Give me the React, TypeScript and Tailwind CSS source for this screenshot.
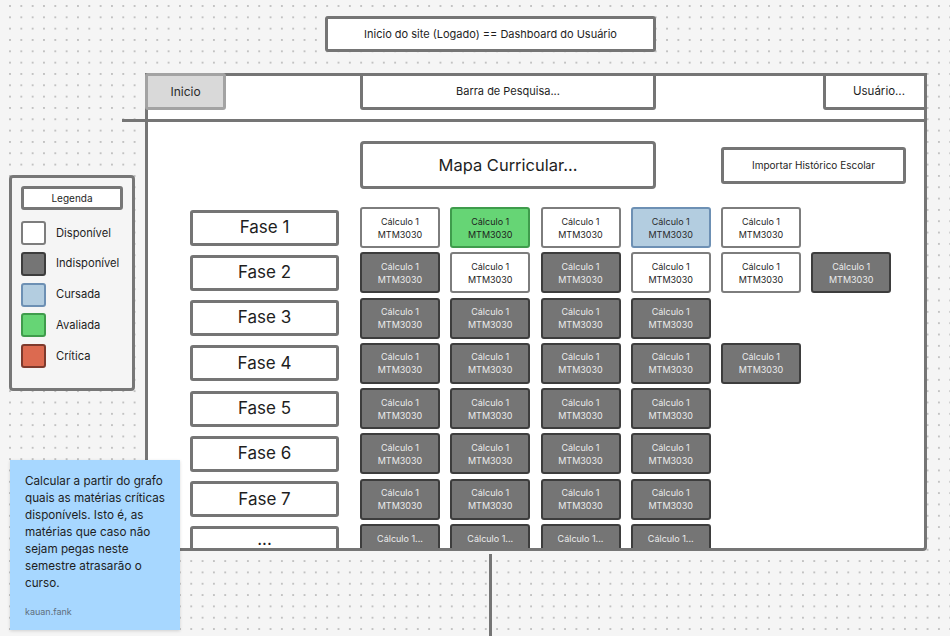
import React from "react";

type Kind = "w" | "d" | "g" | "b";

const rows: Kind[][] = [
  ["w", "g", "w", "b", "w"],
  ["d", "w", "d", "w", "w", "d"],
  ["d", "d", "d", "d"],
  ["d", "d", "d", "d", "d"],
  ["d", "d", "d", "d"],
  ["d", "d", "d", "d"],
  ["d", "d", "d", "d"],
  ["d", "d", "d", "d"],
];

const cardStyles: Record<Kind, string> = {
  w: "bg-white border-[#7d7d7d] text-[#1e1e1e]",
  d: "bg-[#757575] border-[#3d3d3d] text-[#ececec]",
  g: "bg-[#66d575] border-[#3f9c4c] text-[#1e1e1e]",
  b: "bg-[#b3cde0] border-[#6d90b4] text-[#2a2a2a]",
};

function Card({ kind, last }: { kind: Kind; last: boolean }) {
  return (
    <div
      className={`w-[80px] h-[41px] shrink-0 rounded-[3px] border-[2.5px] flex flex-col items-center justify-center text-[9px] leading-[13px] ${cardStyles[kind]}`}
    >
      <span>{last ? "Cálculo 1..." : "Cálculo 1"}</span>
      <span className={last ? "invisible" : ""}>MTM3030</span>
    </div>
  );
}

const legend: { label: string; cls: string }[] = [
  { label: "Disponível", cls: "bg-white border-[#7d7d7d]" },
  { label: "Indisponível", cls: "bg-[#757575] border-[#3d3d3d]" },
  { label: "Cursada", cls: "bg-[#b3cde0] border-[#6d90b4]" },
  { label: "Avaliada", cls: "bg-[#66d575] border-[#3f9c4c]" },
  { label: "Crítica", cls: "bg-[#dc6a50] border-[#7e3a2d]" },
];

export default function App() {
  return (
    <div className="relative w-[950px] h-[636px] overflow-hidden bg-[#f5f5f5] bg-[radial-gradient(circle,#c2c2c2_0.9px,transparent_1.1px)] bg-[length:11.33px_11.33px] bg-[position:4.33px_0.33px] font-['Inter','Noto_Sans',sans-serif] text-[#1e1e1e]">
      {/* Title */}
      <div className="absolute left-[325px] top-[16px] w-[331px] h-[36px] bg-white border-[3px] border-[#757575] rounded-[3px] flex items-center justify-center text-[11px]">
        Inicio do site (Logado) == Dashboard do Usuário
      </div>

      {/* Main frame */}
      <div className="absolute left-[145px] top-[73px] w-[782px] h-[478px] bg-white border-[3px] border-[#757575] rounded-br-[4px] flex flex-col">
        {/* Header */}
        <div className="-mt-[3px] -mx-[3px] h-[37px] flex shrink-0">
          <div className="w-[81px] h-[37px] bg-[#d9d9d9] border-[3px] border-[#a3a3a3] rounded-[3px] flex items-center justify-center text-[12px] text-[#2a2a2a]">
            Inicio
          </div>
          <div className="ml-[134px] w-[296px] h-[37px] bg-white border-[3px] border-[#757575] rounded-b-[3px] flex items-center justify-center text-[11px]">
            Barra de Pesquisa...
          </div>
          <div className="ml-auto w-[104px] h-[37px] bg-white border-[3px] border-[#757575] rounded-[3px] flex items-center justify-end pr-[19px] text-[11.5px]">
            Usuário...
          </div>
        </div>
        <div className="mt-[9px] -ml-[26px] w-[calc(100%+26px)] h-[3px] bg-[#757575] shrink-0" />

        {/* Body */}
        <div className="flex-1 overflow-hidden pl-[42px]">
          <div className="flex items-start mt-[19px] ml-[170px]">
            <div className="w-[296px] h-[48px] border-[3px] border-[#757575] rounded-[4px] flex items-center justify-center text-[16.5px]">
              Mapa Curricular...
            </div>
            <div className="ml-[65px] mt-[6px] w-[185px] h-[37px] border-[3px] border-[#757575] rounded-[3px] flex items-center justify-center text-[10px]">
              Importar Histórico Escolar
            </div>
          </div>

          <div className="mt-[18px] flex flex-col gap-y-[4.3px]">
            {rows.map((r, i) => {
              const last = i === rows.length - 1;
              return (
                <div key={i} className="flex items-center h-[41px]">
                  {last ? (
                    <div className="self-start mt-[2px] w-[149px] h-[40px] shrink-0 border-[3px] border-[#757575] rounded-[3px] flex justify-center text-[17px] leading-[20px]">
                      ...
                    </div>
                  ) : (
                    <div className="w-[149px] h-[36px] shrink-0 border-[3px] border-[#757575] rounded-[3px] flex items-center justify-center text-[17px]">
                      {`Fase ${i + 1}`}
                    </div>
                  )}
                  <div className="ml-[21px] flex gap-x-[10.25px]">
                    {r.map((k, j) => (
                      <Card key={j} kind={k} last={last} />
                    ))}
                  </div>
                </div>
              );
            })}
          </div>
        </div>
      </div>

      {/* Connector line */}
      <div className="absolute left-[489px] top-[554px] w-[2.5px] h-[90px] bg-[#757575]" />

      {/* Legend */}
      <div className="absolute left-[9px] top-[175px] w-[126px] h-[216px] border-[3px] border-[#777] rounded-[4px] bg-[#f5f5f5] px-[9px] pt-[8px]">
        <div className="h-[24px] bg-white border-[3px] border-[#777] rounded-[3px] flex items-center justify-center text-[10px]">
          Legenda
        </div>
        <div className="mt-[11px] flex flex-col gap-y-[6.8px]">
          {legend.map((l) => (
            <div key={l.label} className="flex items-center h-[24px]">
              <div className={`w-[25px] h-[24px] rounded-[3px] border-[2.5px] ${l.cls}`} />
              <span className="ml-[10px] text-[11.2px]">{l.label}</span>
            </div>
          ))}
        </div>
      </div>

      {/* Sticky note */}
      <div className="absolute left-[10px] top-[460px] w-[170px] h-[170px] bg-[#a7d7ff] shadow-[0_1px_3px_rgba(0,0,0,0.15)] pl-[15px] pr-[6px] pt-[13px] flex flex-col">
        <p className="text-[11.7px] leading-[17px] text-[#1e1e1e]">
          Calcular a partir do grafo quais as matérias críticas disponívels. Isto é, as matérias que caso não sejam pegas neste semestre atrasarão o curso.
        </p>
        <p className="mt-[13px] text-[9px] text-[#5f6f7d]">kauan.fank</p>
      </div>
    </div>
  );
}
